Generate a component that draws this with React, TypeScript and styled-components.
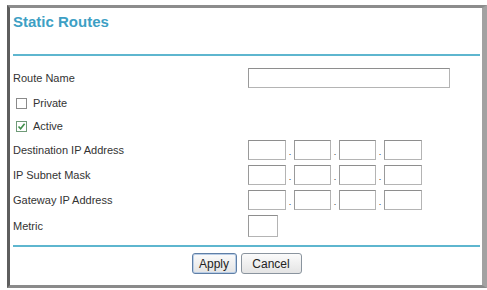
import React from 'react'
import styled, { createGlobalStyle } from 'styled-components'

const GlobalStyle = createGlobalStyle`
    html, body {
        margin: 0;
        padding: 0;
        background: #ffffff;
    }
    body {
        font-family: 'Liberation Sans', Arial, sans-serif;
        color: #2a2a2a;
    }
`

const Frame = styled.div`
    box-sizing: border-box;
    margin: 5px 0 0 7px;
    width: 480px;
    height: 283px;
    border: 3px solid #8c8c8c;
    border-left-color: #5e5e5e;
    border-right: 5px solid #a2a2a2;
    border-bottom-color: #8a8a8a;
    padding: 0 2px 0 3px;
    display: flex;
    flex-direction: column;
`

const Header = styled.div`
    height: 48px;
    border-bottom: 2px solid #5eb6cf;
    padding-top: 5px;
    box-sizing: border-box;
`

const Title = styled.h1`
    margin: 0;
    font-size: 15px;
    font-weight: bold;
    color: #3d9fc4;
    letter-spacing: 0;
`

const Form = styled.div`
    display: flex;
    flex-direction: column;
    padding-top: 9px;
    border-bottom: 2px solid #5eb6cf;
    padding-bottom: 6px;
`

const Row = styled.div<{ $h: number }>`
    display: grid;
    grid-template-columns: 235px 1fr;
    align-items: center;
    height: ${p => p.$h}px;
`

const Label = styled.span`
    font-size: 11px;
    color: #333;
    white-space: nowrap;
`

const CheckLine = styled.label`
    display: flex;
    align-items: center;
    gap: 6px;
    padding-left: 3px;
    font-size: 11px;
    color: #333;
`

const Box = styled.span<{ $checked?: boolean }>`
    box-sizing: border-box;
    width: 11px;
    height: 11px;
    border: 1px solid ${p => (p.$checked ? '#6f9a78' : '#8a8a8a')};
    background: #fff;
    display: inline-flex;
    align-items: center;
    justify-content: center;
`

const Field = styled.span<{ $w: number; $h?: number }>`
    box-sizing: border-box;
    display: inline-block;
    width: ${p => p.$w}px;
    height: ${p => p.$h ?? 20}px;
    border: 1px solid #b4b4b4;
    border-top-color: #8e8e8e;
    border-left-color: #9a9a9a;
    background: #fff;
`

const IpGroup = styled.div`
    display: flex;
    align-items: center;
`

const Dot = styled.span`
    width: 8px;
    text-align: center;
    font-size: 9px;
    line-height: 20px;
    padding-top: 4px;
    color: #333;
`

const Footer = styled.div`
    flex: 1;
    display: flex;
    justify-content: center;
    align-items: flex-start;
    gap: 4px;
    padding-top: 6px;
`

const Button = styled.button<{ $focused?: boolean; $w: number }>`
    box-sizing: border-box;
    width: ${p => p.$w}px;
    height: 21px;
    padding: 0;
    font-family: 'Liberation Sans', Arial, sans-serif;
    font-size: 12px;
    color: #222;
    border-radius: 3px;
    border: 1px solid ${p => (p.$focused ? '#5f7fa6' : '#8a949e')};
    box-shadow: ${p => (p.$focused ? 'inset 0 0 0 1px #b9cde6' : 'none')};
    background: linear-gradient(#fbfbfb, #e4e4e4);
`

const Check = () => (
    <svg width="9" height="9" viewBox="0 0 9 9">
        <path d="M1.5 4.5 L3.6 6.8 L7.6 1.8" fill="none" stroke="#3f8f4a" strokeWidth="1.6" />
    </svg>
)

const IpFields = () => (
    <IpGroup>
        <Field $w={38} />
        <Dot>.</Dot>
        <Field $w={37} />
        <Dot>.</Dot>
        <Field $w={37} />
        <Dot>.</Dot>
        <Field $w={38} />
    </IpGroup>
)

export default function App() {
    return (
        <>
            <GlobalStyle />
            <Frame>
                <Header>
                    <Title>Static Routes</Title>
                </Header>
                <Form>
                    <Row $h={26}>
                        <Label>Route Name</Label>
                        <Field $w={202} />
                    </Row>
                    <Row $h={24}>
                        <CheckLine>
                            <Box />
                            Private
                        </CheckLine>
                    </Row>
                    <Row $h={22}>
                        <CheckLine>
                            <Box $checked>
                                <Check />
                            </Box>
                            Active
                        </CheckLine>
                    </Row>
                    <Row $h={25}>
                        <Label>Destination IP Address</Label>
                        <IpFields />
                    </Row>
                    <Row $h={25}>
                        <Label>IP Subnet Mask</Label>
                        <IpFields />
                    </Row>
                    <Row $h={26}>
                        <Label>Gateway IP Address</Label>
                        <IpFields />
                    </Row>
                    <Row $h={26}>
                        <Label>Metric</Label>
                        <Field $w={30} $h={22} />
                    </Row>
                </Form>
                <Footer>
                    <Button $focused $w={45}>Apply</Button>
                    <Button $w={61}>Cancel</Button>
                </Footer>
            </Frame>
        </>
    )
}
